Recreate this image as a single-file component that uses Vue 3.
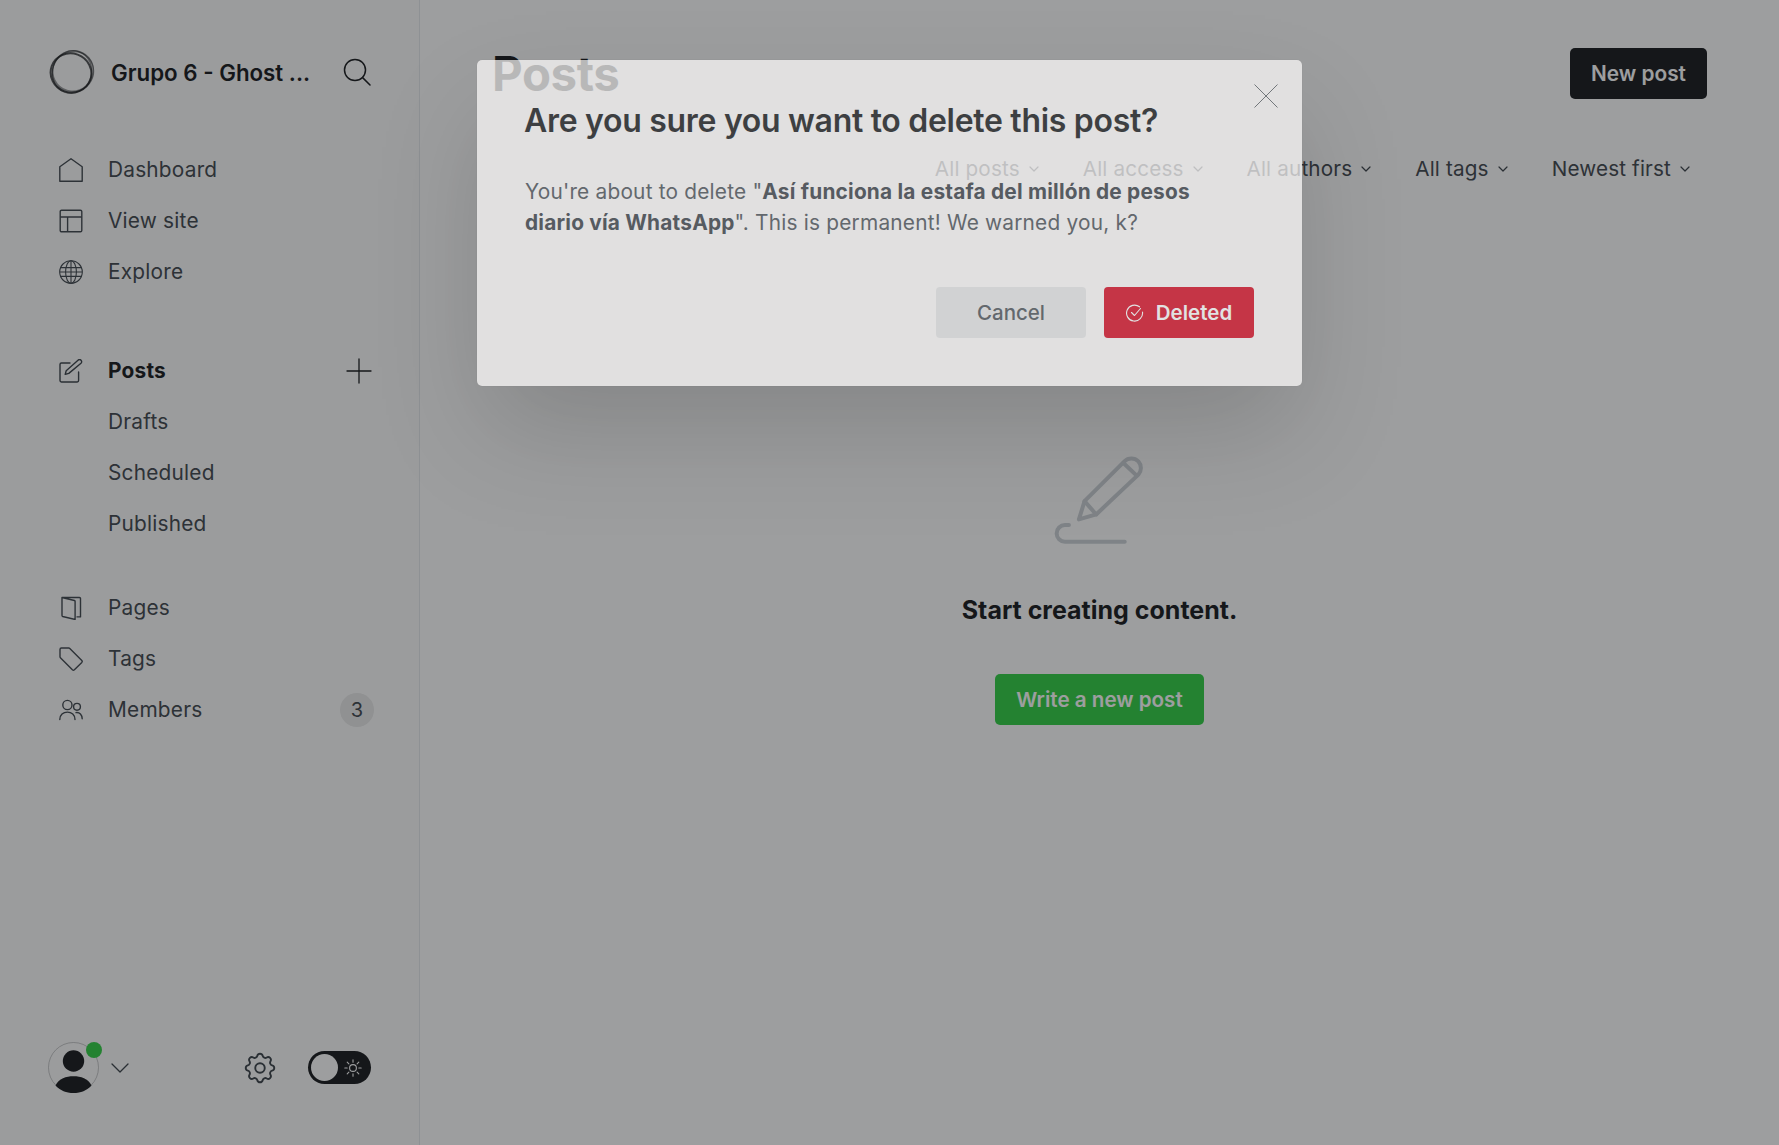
<template>
  <div class="admin">
    <!-- sidebar -->
    <aside class="sidebar">
      <div class="brand">
        <svg class="logo" viewBox="0 0 46 46" fill="none" stroke="#15171a">
          <ellipse cx="22" cy="24" rx="20.5" ry="19.5" stroke-width="2" transform="rotate(20 22 24)" opacity=".75" />
          <ellipse cx="24" cy="22" rx="20" ry="20.5" stroke-width="1.5" transform="rotate(50 24 22)" opacity=".45" />
          <ellipse cx="23" cy="23" rx="21.5" ry="19.5" stroke-width="1.3" transform="rotate(110 23 23)" opacity=".5" />
          <ellipse cx="24" cy="23" rx="21" ry="20" stroke-width="1" transform="rotate(150 24 23)" opacity=".4" />
        </svg>
        <span class="brand-name">Grupo 6 - Ghost ...</span>
        <svg class="search" viewBox="0 0 28 28" fill="none" stroke="#15171a" stroke-width="1.5" stroke-linecap="round">
          <circle cx="12" cy="12" r="10.5" />
          <path d="M19.6 19.6 27 27" />
        </svg>
      </div>

      <nav class="nav-group first">
        <a class="nav-item">
          <svg class="nav-icon" viewBox="0 0 24 24" fill="none" stroke="currentColor" stroke-width="1.4" stroke-linejoin="round">
            <path d="M.8 23.2V8.8L12 .8l11.2 8v14.4z" />
          </svg>
          Dashboard
        </a>
        <a class="nav-item">
          <svg class="nav-icon" viewBox="0 0 24 24" fill="none" stroke="currentColor" stroke-width="1.4" stroke-linejoin="round">
            <rect x="1.2" y="1.2" width="21.6" height="21.6" rx="1.4" />
            <path d="M1.2 8h21.6M8.6 8v14.8" />
          </svg>
          View site
        </a>
        <a class="nav-item">
          <svg class="nav-icon" viewBox="0 0 24 24" fill="none" stroke="currentColor" stroke-width="1.1">
            <circle cx="12" cy="12" r="11.3" />
            <ellipse cx="12" cy="12" rx="5.4" ry="11.3" />
            <path d="M12 .7v22.6M1.6 7.6h20.8M.7 12h22.6M1.6 16.4h20.8" />
          </svg>
          Explore
        </a>
      </nav>

      <nav class="nav-group">
        <a class="nav-item active">
          <svg class="nav-icon" viewBox="0 0 24 24" fill="none" stroke="#394047" stroke-width="1.4" stroke-linecap="round" stroke-linejoin="round">
            <path d="M11 4H2.400A1.400 1.400 0 0 0 1 5.400v16.200A1.400 1.400 0 0 0 2.400 23h15.800a1.400 1.400 0 0 0 1.400-1.400V13" />
            <path d="m9.800 14.400-3.600 1 1-3.600L19 1.200c.9-.8 2.200-.8 3 0 .9.900.9 2.200 0 3z" />
          </svg>
          Posts
          <svg class="plus" viewBox="0 0 26 26" fill="none" stroke="#15171a" stroke-width="1.3" stroke-linecap="round">
            <path d="M13 1v24M1 13h24" />
          </svg>
        </a>
        <a class="nav-item sub">Drafts</a>
        <a class="nav-item sub">Scheduled</a>
        <a class="nav-item sub">Published</a>
      </nav>

      <nav class="nav-group tight">
        <a class="nav-item">
          <svg class="nav-icon" viewBox="0 0 24 24" fill="none" stroke="currentColor" stroke-width="1.4" stroke-linejoin="round">
            <path d="M3 1.500h17.400a1.100 1.100 0 0 1 1.100 1.100v18.300h-4M3 1.500v18a1 1 0 0 0 .7 1l12.400 3V5.500a1 1 0 0 0-.7-1z" />
          </svg>
          Pages
        </a>
        <a class="nav-item">
          <svg class="nav-icon" viewBox="0 0 24 24" fill="none" stroke="currentColor" stroke-width="1.4" stroke-linejoin="round">
            <path d="M1 2.400A1.400 1.400 0 0 1 2.400 1h7.400c.4 0 .7.100 1 .4l12 12c.5.500.5 1.400 0 2L15.400 22.800c-.6.500-1.400.500-2 0L1.400 10.800c-.3-.3-.4-.6-.4-1z" />
          </svg>
          Tags
        </a>
        <a class="nav-item">
          <svg class="nav-icon" viewBox="0 0 24 24" fill="none" stroke="currentColor" stroke-width="1.4" stroke-linecap="round">
            <circle cx="8.400" cy="7" r="4.600" />
            <circle cx="18" cy="8.800" r="3.400" />
            <path d="M.8 21.500c0-4.500 3.400-7.400 7.600-7.400s7.600 2.900 7.600 7.400M17 14.600c3.600-.6 6.200 2.400 6.200 6.200" />
          </svg>
          Members
          <span class="count">3</span>
        </a>
      </nav>

      <div class="side-footer">
        <div class="user">
          <svg class="avatar" viewBox="0 0 51 51">
            <circle cx="25.5" cy="25.5" r="25" fill="none" stroke="#8d8e90" stroke-width=".5" />
            <circle cx="25.5" cy="19" r="10.7" fill="#15171a" />
            <path d="M7.500 43.500C11 36.300 18 34.300 25.500 34.300s14.500 2 18 9.200c-4.500 5-11 7.500-18 7.500s-13.500-2.500-18-7.500z" fill="#15171a" />
          </svg>
          <span class="online"></span>
          <svg class="caret" viewBox="0 0 18 10" fill="none" stroke="#394047" stroke-width="1.3" stroke-linecap="round" stroke-linejoin="round">
            <path d="m1 1 8 8 8-8" />
          </svg>
        </div>
        <svg class="gear" viewBox="0 0 24 24" fill="none" stroke="#394047" stroke-width="1.2">
          <path d="M10.325 4.317c.426-1.756 2.924-1.756 3.350 0a1.724 1.724 0 002.573 1.066c1.543-.94 3.310.826 2.370 2.370a1.724 1.724 0 001.065 2.572c1.756.426 1.756 2.924 0 3.350a1.724 1.724 0 00-1.066 2.573c.94 1.543-.826 3.310-2.370 2.370a1.724 1.724 0 00-2.572 1.065c-.426 1.756-2.924 1.756-3.350 0a1.724 1.724 0 00-2.573-1.066c-1.543.94-3.310-.826-2.370-2.370a1.724 1.724 0 00-1.065-2.572c-1.756-.426-1.756-2.924 0-3.350a1.724 1.724 0 001.066-2.573c-.94-1.543.826-3.310 2.370-2.370.996.608 2.296.07 2.572-1.065z" />
          <circle cx="12" cy="12" r="3" />
        </svg>
        <div class="toggle">
          <span class="knob"></span>
          <svg class="sun" viewBox="0 0 18 18" fill="none" stroke="#fff" stroke-width="1.1" stroke-linecap="round">
            <circle cx="9" cy="9" r="3.4" />
            <path d="M9 .8v2.400M9 14.800v2.400M.8 9h2.400M14.800 9h2.400M3.200 3.200 4.900 4.900M13.100 13.100l1.700 1.700M3.200 14.800l1.700-1.700M13.100 4.900l1.700-1.700" />
          </svg>
        </div>
      </div>
    </aside>

    <!-- main -->
    <main class="content">
      <header class="content-head">
        <h2 class="page-title">Posts</h2>
        <button class="btn-black">New post</button>
      </header>

      <div class="filters">
        <span v-for="f in filters" :key="f" class="filter">
          {{ f }}
          <svg class="filter-caret" viewBox="0 0 10 6" fill="none" stroke="#394047" stroke-width="1.2" stroke-linecap="round" stroke-linejoin="round">
            <path d="m1 1 4 4 4-4" />
          </svg>
        </span>
      </div>

      <section class="empty">
        <svg class="empty-icon" viewBox="370 70 280 280" fill="none" stroke="#cbd1d6" stroke-width="12" stroke-linecap="round" stroke-linejoin="round">
          <path d="M448 270 465 215 585 95a30 30 0 0 1 42 0 30 30 0 0 1 0 40L500 255z" />
          <path d="M465 215 500 255M582 100 622 138" />
          <path d="M418 287h-12a25 25 0 0 0 0 50h180" />
        </svg>
        <h4 class="empty-title">Start creating content.</h4>
        <button class="btn-green">Write a new post</button>
      </section>
    </main>

    <!-- overlay + modal -->
    <div class="overlay"></div>
    <div class="modal">
      <svg class="close" viewBox="0 0 24 24" fill="none" stroke="#394047" stroke-width=".8">
        <path d="M.5.5l23 23M23.500.5l-23 23" />
      </svg>
      <h1 class="modal-title">Are you sure you want to delete this post?</h1>
      <p class="modal-body">
        You're about to delete "<strong>Así funciona la estafa del millón de pesos diario vía WhatsApp</strong>". This is permanent! We warned you, k?
      </p>
      <div class="modal-actions">
        <button class="btn-cancel">Cancel</button>
        <button class="btn-red">
          <svg class="check" viewBox="0 0 18 18" fill="none" stroke="#fff" stroke-width="1.1" stroke-linecap="round" stroke-linejoin="round">
            <path d="M16.500 8a8 8 0 1 1-3-5.200" />
            <path d="m5.500 8.500 3 3 6-7" />
          </svg>
          Deleted
        </button>
      </div>
    </div>
  </div>
</template>

<script setup>
const filters = ['All posts', 'All access', 'All authors', 'All tags', 'Newest first']
</script>

<style>
body {
  margin: 0;
  background: #fff;
}
</style>

<style scoped>
.admin {
  position: relative;
  display: flex;
  height: 1145px;
  overflow: hidden;
  font-family: Inter, "Noto Sans", sans-serif;
  color: #15171a;
  background: #fff;
}

/* ===== sidebar ===== */
.sidebar {
  box-sizing: border-box;
  width: 420px;
  flex: none;
  display: flex;
  flex-direction: column;
  padding: 49px 47px 0 49px;
  border-right: 1px solid #e5e9ed;
  background: #fcfcfc;
}

.brand {
  display: flex;
  align-items: center;
  height: 46px;
}

.logo {
  width: 46px;
  height: 46px;
  flex: none;
}

.brand-name {
  margin-left: 16px;
  font-size: 22.3px;
  font-weight: 600;
  white-space: nowrap;
}

.search {
  width: 28px;
  height: 28px;
  margin-left: auto;
  margin-right: 1px;
}

.nav-group {
  display: flex;
  flex-direction: column;
  margin-top: 48px;
}

.nav-group.first {
  margin-top: 49px;
}

.nav-group.tight {
  margin-top: 33px;
}

.nav-item {
  display: flex;
  align-items: center;
  height: 51px;
  padding-left: 10px;
  font-size: 20.85px;
  letter-spacing: .2px;
  color: #3f464d;
}

.nav-icon {
  width: 24px;
  height: 24px;
  margin-right: 25px;
  flex: none;
}

.nav-item.sub {
  padding-left: 59px;
}

.nav-item.active {
  font-weight: 700;
  color: #15171a;
}

.plus {
  width: 26px;
  height: 26px;
  margin-left: auto;
}

.count {
  display: flex;
  align-items: center;
  justify-content: center;
  width: 34px;
  height: 34px;
  margin-left: auto;
  margin-right: -2px;
  border-radius: 50%;
  background: #e8e8e8;
  font-size: 20px;
}

.side-footer {
  display: flex;
  align-items: center;
  margin-top: auto;
  margin-bottom: 52px;
}

.user {
  position: relative;
  display: flex;
  align-items: center;
  margin-left: -1px;
}

.avatar {
  width: 51px;
  height: 51px;
}

.online {
  position: absolute;
  left: 38px;
  top: 0;
  width: 16px;
  height: 16px;
  border-radius: 50%;
  background: #30cf43;
}

.caret {
  width: 18px;
  height: 10px;
  margin-left: 12px;
}

.gear {
  width: 38px;
  height: 38px;
  margin-left: 112px;
}

.toggle {
  position: relative;
  display: flex;
  align-items: center;
  justify-content: flex-end;
  box-sizing: border-box;
  width: 63px;
  height: 33px;
  margin-left: 29px;
  padding-right: 9px;
  border-radius: 17px;
  background: #15171a;
}

.knob {
  position: absolute;
  left: 3px;
  top: 3px;
  width: 27px;
  height: 27px;
  border-radius: 50%;
  background: #fff;
}

.sun {
  width: 18px;
  height: 18px;
}

/* ===== main ===== */
.content {
  flex: 1;
  display: flex;
  flex-direction: column;
  padding: 48px 72px 0 72px;
  min-width: 0;
}

.content-head {
  display: flex;
  align-items: center;
  justify-content: space-between;
  height: 51px;
}

.page-title {
  margin: 0;
  font-size: 47.4px;
  font-weight: 700;
  letter-spacing: -.4px;
}

.btn-black {
  width: 137px;
  height: 51px;
  border: none;
  border-radius: 5px;
  background: #15171a;
  color: #fff;
  font: 600 20.8px Inter, sans-serif;
}

.filters {
  display: flex;
  justify-content: flex-end;
  gap: 44px;
  margin-top: 51px;
  padding-right: 17px;
  height: 36px;
  align-items: center;
}

.filter {
  display: flex;
  align-items: center;
  gap: 9px;
  font-size: 20.7px;
  letter-spacing: .15px;
  color: #3f464d;
}

.filter-caret {
  width: 10px;
  height: 6px;
  margin-top: 2px;
}

.empty {
  display: flex;
  flex-direction: column;
  align-items: center;
  margin-top: 267px;
}

.empty-icon {
  width: 93px;
  height: 93px;
}

.empty-title {
  margin: 46px 0 0;
  font-size: 25px;
  line-height: 36px;
  font-weight: 700;
}

.btn-green {
  width: 209px;
  height: 51px;
  margin-top: 46px;
  border: none;
  border-radius: 5px;
  background: #30cf43;
  color: #fff;
  font: 600 20.6px Inter, sans-serif;
}

/* ===== overlay + modal ===== */
.overlay {
  position: absolute;
  inset: 0;
  background: rgba(21, 23, 26, .42);
}

.modal {
  position: absolute;
  left: 477px;
  top: 60px;
  box-sizing: border-box;
  width: 825px;
  height: 326px;
  padding: 40px 48px 0 47px;
  border-radius: 5px;
  background: #fefcfc;
  opacity: .7;
  box-shadow: 0 50px 100px -10px rgba(0, 0, 0, .22), 0 0 1px rgba(0, 0, 0, .2);
}

.close {
  position: absolute;
  right: 24px;
  top: 24px;
  width: 24px;
  height: 24px;
}

.modal-title {
  margin: 0;
  font-size: 32px;
  line-height: 42px;
  font-weight: 600;
  letter-spacing: -.3px;
}

.modal-body {
  margin: 35px 0 0 1px;
  max-width: 680px;
  font-size: 20.85px;
  line-height: 30.6px;
  letter-spacing: .2px;
  color: #4b5259;
}

.modal-body strong {
  color: #394047;
}

.modal-actions {
  display: flex;
  justify-content: flex-end;
  gap: 18px;
  margin-top: 49px;
}

.btn-cancel,
.btn-red {
  display: flex;
  align-items: center;
  justify-content: center;
  width: 150px;
  height: 51px;
  border: none;
  border-radius: 4px;
  font: 500 20.5px Inter, sans-serif;
}

.btn-cancel {
  background: #e8e9ea;
  color: #4b5259;
}

.btn-red {
  gap: 12px;
  background: #d60a21;
  color: #fff;
  font-weight: 600;
}

.check {
  width: 18px;
  height: 18px;
}
</style>
